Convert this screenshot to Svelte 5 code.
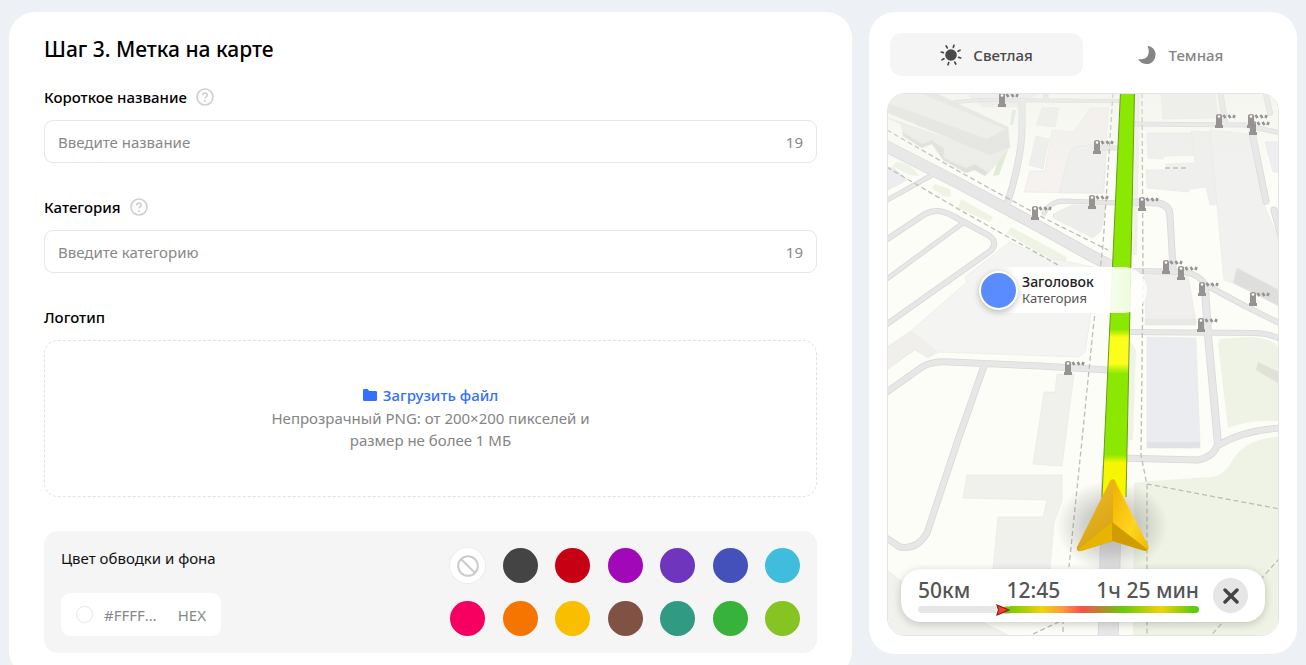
<script>
  let name = $state('')
  let category = $state('')
  let hex = $state('#FFFFFF')
  let theme = $state('light')

  const max_length = 19

  const colors = [
    { value: '', title: 'Без цвета' },
    { value: '#444444', title: 'Серый' },
    { value: '#c80014', title: 'Красный' },
    { value: '#a008b8', title: 'Пурпурный' },
    { value: '#6f35bd', title: 'Фиолетовый' },
    { value: '#4551bb', title: 'Синий' },
    { value: '#40bddd', title: 'Голубой' },
    { value: '#f50060', title: 'Розовый' },
    { value: '#f57500', title: 'Оранжевый' },
    { value: '#f9be00', title: 'Жёлтый' },
    { value: '#7f5243', title: 'Коричневый' },
    { value: '#309a82', title: 'Бирюзовый' },
    { value: '#37b33c', title: 'Зелёный' },
    { value: '#86c423', title: 'Салатовый' },
  ]

  const roads = [
    { d: 'M870 138 L960 184 L1040 227 L1090 255 L1130 276', w: 11 },
    { d: 'M1022 101 L1022 133 Q1020 165 1007 204', w: 6 },
    { d: 'M880 204 L934 174', w: 4 },
    { d: 'M880 244 L925 214 Q938 207 953 216 L988 235 Q1000 243 989 252 L880 329', w: 5 },
    { d: 'M963 223 L880 284', w: 4 },
    { d: 'M880 397 L922 367 Q932 361 950 362 L1040 366 L1108 370', w: 6 },
    { d: 'M984 366 L958 440 L927 533 Q917 550 900 547 L880 534', w: 6 },
    { d: 'M955 102 L980 100 L1120 101', w: 3 },
    { d: 'M1046 90 L1046 99', w: 4 },
    { d: 'M1134 124 L1245 125 L1285 134', w: 4 },
    { d: 'M1220 90 L1225 122', w: 5 },
    { d: 'M1265 90 L1270 113', w: 5 },
    { d: 'M1252 132 L1266 201', w: 6 },
    { d: 'M1274 210 L1288 262', w: 6 },
    { d: 'M1130 202 L1158 203 Q1170 205 1170 216 L1173 268', w: 6 },
    { d: 'M1044 213 Q1050 202 1062 201 L1118 203', w: 4 },
    { d: 'M1096 148 L1118 148', w: 4 },
    { d: 'M1135 271 L1185 272 Q1198 274 1206 285 L1245 306 L1285 326', w: 5 },
    { d: 'M1205 288 L1208 335 L1218 444', w: 7 },
    { d: 'M1126 332 L1255 333 Q1270 333 1284 341', w: 5 },
    { d: 'M1120 458 L1198 460 Q1213 457 1217 446 Q1245 429 1285 428', w: 6 },
    { d: 'M1112 470 L1110 560 L1108 645', w: 20 },
  ]

  const buildings = [
    { d: 'M971 93 H1038 L1020 107 L983 107 L969 96 Z', fill: '#efefed' },
    { d: 'M883 116 L990 153 L1010 147 L987 175 L975 168 L966 170 L944 158 V150 L932 141 L922 146 L903 134 L901 124 L885 117 Z', fill: '#ecece9' },
    { d: 'M883 111 L892 93 L935 93 L1008 127 L1010 147 L990 155 Z', fill: '#e3e3df' },
    { d: 'M887 103 L897 93 L920 93 L1006 129 L987 139 Z', fill: '#eeeeec' },
    { d: 'M903 132 L922 144 L932 140 L944 149 L944 158 L966 168 L975 164 L987 172 L985 176 L974 170 L966 173 L943 160 L932 144 L922 148 L903 136 Z', fill: '#dededb' },
    { d: 'M1042 108 H1059 L1055 127 L1036 125 Z', fill: '#eeeeec' },
    { d: 'M1036 136 L1049 139 L1043 169 L1029 165 Z', fill: '#eeeeec' },
    { d: 'M1052 130 L1074 132 L1090 108 H1108 L1104 193 L1024 192 L1030 171 H1045 Z', fill: '#f5f2f0' },
    { d: 'M1074 147 L1107 142 L1103 193 H1059 L1069 154 Z', fill: '#efefed' },
    { d: 'M1053 214 L1072 205 L1106 206 L1101 231 L1093 238 L1053 218 Z', fill: '#ededeb' },
    { d: 'M887 167 L894 168 L907 180 L888 190 Z', fill: '#ececf1' },
    { d: 'M1010 242 L1040 256 L1098 268 L1085 352 L1079 357 L939 352 L928 358 L915 350 L887 369 V347 L912 330 L967 282 L965 277 Z', fill: '#f4f4f3' },
    { d: 'M912 332 L936 351 L928 357 L915 349 L887 370 V348 Z', fill: '#f0efec' },
    { d: 'M1057 374 H1074 L1062 466 L1033 464 L1044 392 H1055 Z', fill: '#f0f0ed' },
    { d: 'M967 475 H1062 V501 L1054 523 L1050 569 H993 L998 517 H1043 L1047 500 L963 498 Z', fill: '#f0f0ed' },
    { d: 'M1161 93 H1215 L1218 118 L1163 119 Z', fill: '#efefec' },
    { d: 'M1147 133 H1192 L1196 155 L1165 156 L1163 159 L1148 158 Z', fill: '#efefed' },
    { d: 'M1146 170 H1166 V164 L1195 163 L1191 131 L1212 132 L1219 204 L1210 205 L1206 187 L1190 189 L1188 192 L1147 188 Z', fill: '#efefed' },
    { d: 'M1210 130 L1249 134 L1265 207 L1279 240 V306 L1233 283 L1224 280 Z', fill: '#f1f1ef' },
    { d: 'M1233 283 L1237 268 L1279 290 V306 Z', fill: '#dedede' },
    { d: 'M1144 275 H1188 L1196 323 H1146 Z', fill: '#f0efed' },
    { d: 'M1145 319 H1196 V325 H1145 Z', fill: '#e8e8e6' },
    { d: 'M1147 337 L1196 338 L1200 445 L1147 446 Z', fill: '#ebecef' },
    { d: 'M1147 442 H1200 V448 H1147 Z', fill: '#e1e2e5' },
    { d: 'M887 570 L905 584 L1010 636 H887 Z', fill: '#f1f1ed' },
    { d: 'M1265 142 H1279 V172 H1273 Z', fill: '#eeeef3' },
  ]

  const greens = [
    'M896 162 Q910 162 919 176 L909 175 L892 166 Z',
    'M935 184 L950 189 L951 197 L943 196 L932 188 Z',
    'M961 199 L993 217 L990 222 L958 208 Z',
    'M1011 227 L1067 257 L1065 263 L1040 254 L1007 233 Z',
    'M1220 339 L1250 337 Q1272 338 1280 348 V421 Q1250 419 1228 428 L1218 344 Z',
    'M1151 481 L1212 477 Q1223 476 1231 463 Q1244 438 1280 437 V637 H1133 L1134 483 Z',
    'M1134 93 H1140 L1137 255 H1133 Z',
    'M1130 340 L1136 350 L1133 440 H1128 Z',
  ]

  const lawns = [
    'M1012 110 H1016 L1013 125 H1010 Z',
    'M1001 151 L1008 150 L999 175 L993 176 Z',
  ]

  const paths = [
    'M880 126 L960 172 L1040 216 L1108 250',
    'M880 163 L960 210 L1060 266',
    'M1113 93 L1103 245 L1093 330 L1082 440 L1069 567',
    'M1142 93 L1143 275 L1141 455 L1147 485 V640',
    'M1147 484 L1285 510',
    'M1285 552 L1207 640',
    'M1063 640 V620 L1020 640',
    'M1165 168 H1188',
  ]

  const barriers = [
    [1002, 100], [1253, 128], [1219, 121], [1251, 121], [1097, 147], [1035, 213],
    [1092, 202], [1142, 204], [1166, 267], [1181, 273], [1202, 289], [1253, 299],
    [1201, 325], [1068, 368],
  ]
</script>

{#snippet help()}
  <button type="button" class="help" aria-label="Подсказка">
    <svg viewBox="0 0 18 18" width="18" height="18">
      <circle cx="9" cy="9" r="8" fill="none" stroke="#cfcfcf" stroke-width="1.6" />
      <path d="M6.7 7.2 C6.8 4.4 11.4 4.5 11.3 7.1 C11.2 8.9 9 8.8 9 10.6" fill="none" stroke="#cfcfcf" stroke-width="1.6" />
      <circle cx="9" cy="13" r="1" fill="#cfcfcf" />
    </svg>
  </button>
{/snippet}

<main class="page">
  <form class="card settings">
    <h1>Шаг 3. Метка на карте</h1>

    <div class="group">
      <div class="caption">
        <label for="name">Короткое название</label>
        {@render help()}
      </div>
      <div class="field">
        <input id="name" type="text" placeholder="Введите название" maxlength={max_length} bind:value={name} />
        <span class="counter">{max_length - name.length}</span>
      </div>
    </div>

    <div class="group">
      <div class="caption">
        <label for="category">Категория</label>
        {@render help()}
      </div>
      <div class="field">
        <input id="category" type="text" placeholder="Введите категорию" maxlength={max_length} bind:value={category} />
        <span class="counter">{max_length - category.length}</span>
      </div>
    </div>

    <div class="group">
      <div class="caption">
        <label for="logo">Логотип</label>
      </div>
      <label class="dropzone">
        <input id="logo" class="file-input" type="file" accept="image/png" />
        <span class="upload">
          <svg viewBox="0 0 14 12" width="14" height="12">
            <path d="M0 1.2 Q0 0 1.2 0 H4.6 L6.2 2 H12.6 Q14 2 14 3.3 V10.4 Q14 12 12.6 12 H1.4 Q0 12 0 10.4 Z" fill="#3370ff" />
          </svg>
          Загрузить файл
        </span>
        <span class="hint">Непрозрачный PNG: от 200×200 пикселей и размер не более 1 МБ</span>
      </label>
    </div>

    <div class="palette">
      <div class="custom">
        <label for="hex">Цвет обводки и фона</label>
        <div class="hex">
          <span class="dot"></span>
          <input id="hex" type="text" bind:value={hex} />
          <span>HEX</span>
        </div>
      </div>
      <div class="swatches">
        {#each colors as color}
          <button
            type="button"
            class="swatch"
            class:empty={!color.value}
            style:background={color.value || '#fff'}
            aria-label={color.title}
            onclick={() => (hex = color.value || '#FFFFFF')}
          >
            {#if !color.value}
              <svg viewBox="0 0 22 22" width="22" height="22">
                <circle cx="11" cy="11" r="9.8" fill="none" stroke="#cccccc" stroke-width="2" />
                <path d="M4 4 L18 18" stroke="#cccccc" stroke-width="2" />
              </svg>
            {/if}
          </button>
        {/each}
      </div>
    </div>
  </form>

  <section class="card preview">
    <div class="tabs">
      <button type="button" class="tab" class:active={theme === 'light'} onclick={() => (theme = 'light')}>
        <svg viewBox="0 0 22 22" width="22" height="22">
          <circle cx="11" cy="11" r="5.8" fill="currentColor" />
          <g stroke="currentColor" stroke-width="1.7" stroke-linecap="round" transform="rotate(17 11 11)">
            {#each [0, 45, 90, 135, 180, 225, 270, 315] as angle}
              <path d="M11 0.8 V3" transform="rotate({angle} 11 11)" />
            {/each}
          </g>
        </svg>
        Светлая
      </button>
      <button type="button" class="tab" class:active={theme === 'dark'} onclick={() => (theme = 'dark')}>
        <svg viewBox="0 0 22 22" width="22" height="22">
          <path d="M11.5 2 C17 2.5 20 7 19.5 11.5 C19 17 14.5 20.5 10 20 C6.5 19.6 3.6 17.8 2.3 15 C6 15.8 9.7 15 11.6 12 C13.4 9 13 5 11.5 2 Z" fill="currentColor" />
        </svg>
        Темная
      </button>
    </div>

    <div class="map">
      <svg class="tiles" viewBox="888 94 390 541" preserveAspectRatio="xMidYMid slice">
        <defs>
          <linearGradient id="route" gradientUnits="userSpaceOnUse" x1="0" y1="93" x2="0" y2="497">
            <stop offset="0.585" stop-color="#8be800" />
            <stop offset="0.605" stop-color="#fdfd1c" />
            <stop offset="0.67" stop-color="#fdfd1c" />
            <stop offset="0.695" stop-color="#8be800" />
            <stop offset="0.895" stop-color="#8be800" />
            <stop offset="0.915" stop-color="#f6f600" />
          </linearGradient>
          <linearGradient id="arrow-left" x1="0" y1="0" x2="0.4" y2="1">
            <stop offset="0" stop-color="#f5bd20" />
            <stop offset="1" stop-color="#d6a41a" />
          </linearGradient>
          <linearGradient id="arrow-right" x1="0" y1="0" x2="1" y2="1">
            <stop offset="0" stop-color="#f0b000" />
            <stop offset="0.6" stop-color="#ffd51e" />
            <stop offset="1" stop-color="#eeb900" />
          </linearGradient>
          <radialGradient id="shade">
            <stop offset="0" stop-color="#555" stop-opacity="0.4" />
            <stop offset="0.5" stop-color="#555" stop-opacity="0.25" />
            <stop offset="1" stop-color="#555" stop-opacity="0" />
          </radialGradient>
          <linearGradient id="haze" x1="0" y1="0" x2="0" y2="1">
            <stop offset="0" stop-color="#eeeeea" stop-opacity="0.5" />
            <stop offset="1" stop-color="#eeeeea" stop-opacity="0" />
          </linearGradient>
          <g id="barrier">
            <path d="M-4 7 V4 H-3 V-5 Q-3 -7 0 -7 Q3 -7 3 -5 V4 H4 V7 Z" fill="#969392" />
            <circle cx="0" cy="-4.5" r="1.3" fill="#fff" />
            <path d="M4.5 -6 L6.5 -3 M9.5 -6 L11.5 -3 M15.5 -6 L14.5 -3" stroke="#969392" stroke-width="2.6" />
          </g>
        </defs>

        <rect x="887" y="93" width="392" height="543" fill="#fcfdf6" />
        {#each greens as d}
          <path {d} fill="#eff3e5" />
        {/each}
        {#each lawns as d}
          <path {d} fill="#dfecd5" />
        {/each}
        <path d="M1258 362 L1279 372 V384 L1256 370 Z" fill="#e0e2da" />
        {#each buildings as building}
          <path d={building.d} fill={building.fill} stroke="#e8e8e5" stroke-width="0.6" />
        {/each}

        <g fill="none" stroke-linejoin="round" stroke-linecap="round">
          {#each roads as road}
            <path d={road.d} stroke="#d9d9da" stroke-width={road.w + 1} />
          {/each}
          {#each roads as road}
            <path d={road.d} stroke="#e7e7e8" stroke-width={road.w - 0.6} />
          {/each}
        </g>
        <g fill="none" stroke="#bdbdbb" stroke-width="1.3" stroke-dasharray="5 3">
          {#each paths as d}
            <path {d} />
          {/each}
        </g>
        <rect x="887" y="93" width="392" height="90" fill="url(#haze)" />

        <ellipse cx="1112" cy="526" rx="56" ry="46" fill="url(#shade)" />
        <path d="M1120.5 92 L1102 497 H1126 L1134.5 92 Z" fill="url(#route)" />
        <path d="M1120.5 92 L1102 497 M1126 497 L1134.5 92" stroke="#6c9a1c" stroke-width="1" />
        {#each barriers as [x, y]}
          <use href="#barrier" {x} {y} />
        {/each}

        <path d="M1113 479 Q1110 479 1108 485 L1077 547 Q1076 552 1081 551 L1113 541 Z" fill="url(#arrow-left)" />
        <path d="M1113 479 Q1115 479 1117 485 L1148 545 Q1150 551 1145 551 L1113 541 Z" fill="url(#arrow-right)" />
        <path d="M1078 550 L1112 522 V541 L1081 551 Z" fill="#e9b400" />
        <path d="M1112 522 L1147 549 Q1147 551 1145 551 L1112 541 Z" fill="#d19c00" />
      </svg>

      <div class="callout">
        <span class="pin"></span>
        <div class="callout-text">
          <strong>Заголовок</strong>
          <span>Категория</span>
        </div>
      </div>

      <div class="eta">
        <div class="trip">
          <div class="numbers">
            <span>50км</span>
            <span>12:45</span>
            <span>1ч 25 мин</span>
          </div>
          <div class="progress">
            <span class="passed"></span>
            <svg viewBox="0 0 14 12" width="14" height="12">
              <path d="M8 2.5 H14 V9.5 H8 Z" fill="#74cc00" />
              <path d="M1 1 L13 6 L1 11 L2.5 6 Z" fill="#f0402c" stroke="#8e1d14" stroke-width="1.2" />
            </svg>
            <span class="ahead"></span>
          </div>
        </div>
        <button type="button" class="close" aria-label="Закрыть">
          <svg viewBox="0 0 16 16" width="16" height="16">
            <path d="M2 2 L14 14 M14 2 L2 14" stroke="#444" stroke-width="3.4" stroke-linecap="round" />
          </svg>
        </button>
      </div>
    </div>
  </section>
</main>

<style>
  :global(body) {
    background: #edf1f6;
  }

  .page,
  .page * {
    box-sizing: border-box;
  }

  .page {
    display: grid;
    grid-template-columns: 1fr 428px;
    align-items: start;
    gap: 17px;
    padding: 12px 9px;
    font-family: 'Noto Sans', sans-serif;
    font-size: 15px;
    line-height: 20px;
    color: #111;
  }

  button,
  input {
    font: inherit;
    color: inherit;
    border: none;
    background: none;
    padding: 0;
  }

  button {
    cursor: pointer;
  }

  svg {
    display: block;
    flex: none;
  }

  .card {
    background: #fff;
    border-radius: 26px;
  }

  .settings {
    padding: 23px 35px 24px;
  }

  h1 {
    margin: 0 0 24px;
    font-size: 21px;
    line-height: 28px;
    font-weight: 500;
    color: #000;
  }

  .group {
    margin-bottom: 34px;
  }

  .caption {
    display: flex;
    align-items: center;
    gap: 9px;
    margin-bottom: 13px;
    font-weight: 500;
    color: #000;
  }

  .field {
    display: flex;
    align-items: center;
    height: 43px;
    padding: 0 13px;
    border: 1px solid #e6e6e6;
    border-radius: 9px;
    color: #888;
  }

  .field input {
    flex: 1;
    min-width: 0;
    outline: none;
  }

  .field input::placeholder {
    color: #888;
  }

  .dropzone {
    display: flex;
    flex-direction: column;
    align-items: center;
    justify-content: center;
    height: 157px;
    padding-bottom: 4px;
    border: 1px dashed #e2e2e2;
    border-radius: 14px;
    cursor: pointer;
  }

  .file-input {
    position: absolute;
    width: 1px;
    height: 1px;
    opacity: 0;
  }

  .upload {
    display: flex;
    align-items: center;
    gap: 6px;
    line-height: 24px;
    font-weight: 500;
    color: #3370ff;
  }

  .hint {
    max-width: 320px;
    line-height: 22px;
    text-align: center;
    color: #858585;
  }

  .palette {
    display: flex;
    justify-content: space-between;
    padding: 17px;
    border-radius: 14px;
    background: #f5f5f5;
  }

  .custom {
    display: flex;
    flex-direction: column;
    justify-content: space-between;
  }

  .hex {
    display: flex;
    align-items: center;
    width: 160px;
    height: 43px;
    padding: 0 15px;
    border-radius: 9px;
    background: #fff;
    color: #888;
  }

  .dot {
    flex: none;
    width: 17px;
    height: 17px;
    margin-right: 11px;
    border: 1px solid #e6e6e6;
    border-radius: 50%;
  }

  .hex input {
    flex: 1;
    min-width: 0;
    margin-right: 20px;
    text-overflow: ellipsis;
    outline: none;
  }

  .swatches {
    display: grid;
    grid-template-columns: repeat(7, 35px);
    justify-content: space-between;
    row-gap: 18px;
    width: 350px;
  }

  .swatch {
    display: flex;
    align-items: center;
    justify-content: center;
    height: 35px;
    border-radius: 50%;
  }

  .swatch.empty {
    box-shadow: 0 0 0 1px #ececec;
  }

  .preview {
    padding: 21px 18px 18px;
  }

  .tabs {
    display: grid;
    grid-template-columns: 1fr 1fr;
    margin: 0 3px 17px;
  }

  .tab {
    display: flex;
    align-items: center;
    justify-content: center;
    gap: 11px;
    height: 43px;
    border-radius: 12px;
    font-weight: 500;
    color: #858585;
  }

  .tab.active {
    background: #f5f5f5;
    color: #494949;
  }

  .map {
    position: relative;
    border: 1px solid #e4e4e4;
    border-radius: 18px;
    overflow: hidden;
  }

  .tiles {
    width: 100%;
  }

  .callout {
    position: absolute;
    top: 173px;
    left: 91px;
    display: flex;
    align-items: center;
    gap: 4px;
    width: 168px;
    height: 46px;
    border-radius: 23px;
    background: linear-gradient(90deg, transparent 18px, #fff 36px, #fff 65%, rgba(255, 255, 255, 0.8));
  }

  .pin {
    flex: none;
    width: 39px;
    height: 39px;
    border: 2px solid #fff;
    border-radius: 50%;
    background: #5b8cff;
    box-shadow: 0 2px 6px rgba(0, 0, 0, 0.25);
  }

  .callout-text {
    display: flex;
    flex-direction: column;
    font-size: 13px;
    line-height: 16px;
    color: #555;
  }

  .callout-text strong {
    font-size: 14px;
    font-weight: 500;
    color: #222;
  }

  .eta {
    position: absolute;
    right: 13px;
    bottom: 13px;
    left: 13px;
    display: flex;
    align-items: center;
    gap: 14px;
    height: 53px;
    padding: 0 17px;
    border-radius: 20px;
    background: #fff;
    box-shadow: 0 2px 8px rgba(0, 0, 0, 0.2);
  }

  .trip {
    flex: 1;
  }

  .numbers {
    display: flex;
    justify-content: space-between;
    font-size: 21px;
    line-height: 28px;
    font-weight: 500;
    color: #555;
  }

  .progress {
    display: flex;
    align-items: center;
  }

  .passed {
    width: 78px;
    height: 7px;
    border-radius: 4px 0 0 4px;
    background: #e6e6e6;
  }

  .ahead {
    flex: 1;
    height: 7px;
    border-radius: 0 4px 4px 0;
    background: linear-gradient(90deg, #74cc00, #f2d20c 17%, #fb9a3c 28%, #f9504c 38%, #66cc08 60%, #f2d20c 80%, #5ccc0c 97%);
  }

  .close {
    display: flex;
    align-items: center;
    justify-content: center;
    flex: none;
    width: 35px;
    height: 35px;
    border-radius: 50%;
    background: #e6e6e6;
  }
</style>
